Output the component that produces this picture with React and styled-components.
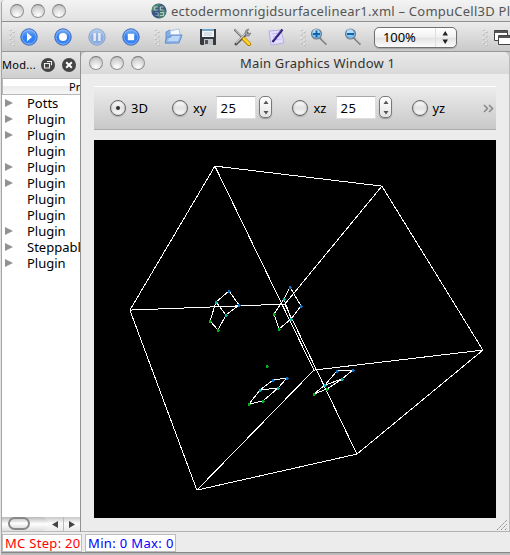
import React from "react";
import styled, { createGlobalStyle } from "styled-components";

const Global = createGlobalStyle`
  * { box-sizing: border-box; }
  body { margin: 0; overflow: hidden; background: #ececec; font: 13px/16px "Noto Sans", "Open Sans", sans-serif; color: #000; }
  svg { display: block; flex: none; }
`;
const Screen = styled.div`
  width: 510px; height: 555px; overflow: hidden; display: flex; flex-direction: column;
  border-left: 1px solid #e4e4e4; white-space: nowrap; background: #ececec;
`;
const AppWindow = styled.div`
  width: 509px; height: 553px; border-left: 1px solid #a4a4a4; border-bottom: 1px solid #858585;
  border-top-left-radius: 4px; display: flex; flex-direction: column; overflow: hidden; flex: none;
`;
const BottomShade = styled.div`height: 2px; background: #b9b9b9;`;
const TitleBar = styled.header`
  height: 22px; flex: none; display: flex; align-items: center;
  background: linear-gradient(#f3f3f3, #e2e2e2); border-bottom: 1px solid #8f8f8f;
`;
const Lights = styled.div`display: flex; gap: 7px; margin-left: ${p => p.$left}px;`;
const Light = styled.i`
  width: 14px; height: 14px; border: 1px solid #929292; border-top-color: #777; border-radius: 50%;
  background: radial-gradient(circle at 50% 85%, #fff 0, #e0e0e0 45%, #b8b8b8 100%);
`;
const Label = styled.span`
  font-size: ${p => p.$size || 13}px; letter-spacing: ${p => p.$track || 0}px; color: ${p => p.$color || "#000"};
  margin-left: ${p => p.$left || 0}px; flex: none;
`;
const Toolbar = styled.div`
  height: 30px; flex: none; display: flex; align-items: center;
  background: linear-gradient(#ececec, #c9c9c9); border-bottom: 1px solid #989898;
`;
const Item = styled.div`margin-left: ${p => p.$left}px; flex: none; opacity: ${p => p.$faded ? 0.48 : 1};`;
const ZoomBox = styled.div`
  width: 83px; height: 21px; margin: 1px 0 0 12px; display: flex; align-items: center; flex: none;
  border: 1px solid #707070; border-radius: 5px; background: linear-gradient(#fff, #f1f1f1 49%, #e3e3e3 51%, #fcfcfc);
  box-shadow: 0 1px 1px #a7a7a7;
`;
const ZoomArrows = styled.div`margin-left: auto; width: 21px; height: 19px; border-left: 1px solid #dedede; padding: 2px 0 0 6px;`;
const Workspace = styled.main`height: 480px; display: flex; flex: none;`;
const Dock = styled.aside`width: 79px; border-right: 1px solid #929292; background: #fff; overflow: hidden; display: flex; flex-direction: column; flex: none;`;
const DockTitle = styled.div`height: 26px; flex: none; display: flex; align-items: center; background: linear-gradient(#e8e8e8, #cfcfcf);`;
const TreeHeader = styled.div`height: 17px; flex: none; border: 1px solid #b8b8b8; border-right: 0; padding: 0 0 0 66px; line-height: 14px; background: linear-gradient(#fff 45%, #ececec 50%, #f7f7f7); overflow: hidden;`;
const Tree = styled.div`flex: 1;`;
const TreeRow = styled.div`height: 16px; display: flex; align-items: center; padding-left: 3px; overflow: hidden;`;
const Arrow = styled.i`
  width: 0; height: 0; flex: none; border: 4.5px solid transparent; border-left: 8px solid ${p => p.$shown ? "#929292" : "transparent"}; border-right: 0;
`;
const Scrollbar = styled.div`height: 15px; display: flex; flex: none; align-items: center; background: linear-gradient(#c8c8c8, #fafafa 45%, #e9e9e9); border-bottom: 1px solid #bbb;`;
const Track = styled.div`width: 46px; height: 14px; border-radius: 0 8px 8px 0; padding-left: 6px; background: linear-gradient(#b9b9b9, #fff 50%, #ddd); flex: none;`;
const Thumb = styled.div`width: 22px; height: 13px; border: 2px solid #888; border-radius: 8px; background: linear-gradient(#ccc, #fff 50%, #ddd);`;
const GraphWindow = styled.section`width: 429px; display: flex; flex-direction: column; background: #ececec; border-right: 1px solid #bbb; border-bottom: 1px solid #b2b2b2; border-radius: 6px 6px 0 0; overflow: hidden; flex: none;`;
const GraphTitle = styled.header`height: 22px; flex: none; display: flex; align-items: center; background: linear-gradient(#e9e9e9, #d9d9d9);`;
const GraphBack = styled.div`background: #c4c4c4; flex: none; display: flex;`;
const Controls = styled.div`
  margin: 12px 0 0 13px; width: 402px; height: 44px; flex: none; display: flex; align-items: center;
  border-top: 1px solid #fff; border-bottom: 1px solid #aaa; background: linear-gradient(#ececec, #c8c8c8);
`;
const Radio = styled.i`
  width: 16px; height: 16px; margin-left: ${p => p.$left}px; flex: none; display: grid; place-items: center;
  border: 1px solid #666; border-radius: 50%; background: linear-gradient(#fff, #e2e2e2 50%, #fff);
  box-shadow: 0 1px 1px #aaa, inset 0 0 2px #aaa;
  &::after { content: ""; width: 4px; height: 4px; border-radius: 50%; background: ${p => p.$checked ? "#303030" : "transparent"}; }
`;
const NumberField = styled.div`width: 40px; height: 23px; margin-left: ${p => p.$left}px; margin-top: -1px; padding: 3px; border: 1px solid #dedede; border-top-color: #aaa; background: #fff; letter-spacing: .5px; flex: none;`;
const Stepper = styled.div`width: 13px; height: 22px; margin: -2px 0 0 3px; padding: 2px 0 0 3px; border: 1px solid #777; border-radius: 5px; background: linear-gradient(#fff, #e4e4e4); box-shadow: 0 1px 1px #999; flex: none;`;
const Canvas = styled.div`margin: 10px 0 0 13px; width: 402px; height: 378px; background: #000; flex: none;`;
const GripRow = styled.div`display: flex; justify-content: flex-end; padding: 2px 1px 0 0;`;
const Status = styled.footer`height: 20px; display: flex; gap: 3px; padding-top: 2px; flex: none;`;
const StatusCell = styled.div`width: ${p => p.$width}px; height: 18px; padding-left: 2px; border: 1px solid #bdbdbd; background: #fff; color: ${p => p.$color}; letter-spacing: ${p => p.$track}px; overflow: hidden; flex: none;`;

const Lamps = ({ left }) => <Lights $left={left}><Light /><Light /><Light /></Lights>;

const Handle = () => (
  <svg width="6" height="18">
    {[0, 1, 2, 3].map(i => <g key={i}><circle cx="1.5" cy={2 + i * 4.4} r="1.1" fill="#aaa" /><circle cx="1.1" cy={1.6 + i * 4.4} r=".8" fill="#fff" /><circle cx="4.5" cy={4.2 + i * 4.2} r="1.1" fill="#aaa" /><circle cx="4.1" cy={3.8 + i * 4.2} r=".8" fill="#fff" /></g>)}
  </svg>
);
const PlayerIcon = ({ kind }) => (
  <svg width="18" height="18" viewBox="0 0 18 18">
    <defs><linearGradient id={"p" + kind} x2="0" y2="1"><stop stopColor="#81b4f3" /><stop offset=".48" stopColor="#347ff0" /><stop offset=".85" stopColor="#3280f5" /><stop offset="1" stopColor="#70adff" /></linearGradient></defs>
    <circle cx="9" cy="9" r="8.2" fill={`url(#p${kind})`} stroke="#3d69b8" />
    <circle cx="9" cy="9" r="7" fill="none" stroke="#9bc4ff" strokeWidth=".6" />
    {kind === "play" && <path d="M7 4.8V13.2L12 9Z" fill="#fff" />}
    {kind === "record" && <circle cx="9" cy="9" r="4" fill="#fff" />}
    {kind === "pause" && <path d="M5.5 5h2.4v8H5.5zM10.2 5h2.4v8h-2.4z" fill="#fff" />}
    {kind === "stop" && <path d="M5.8 5.8h6.4v6.4H5.8z" fill="#fff" />}
  </svg>
);
const Globe = () => (
  <svg width="16" height="16" viewBox="0 0 16 16">
    <circle cx="8" cy="8" r="7.6" fill="#405c7b" /><path d="M2 3Q5 0 9 1L7 4L3 7L1 8Q0 5 2 3M9 9l5-2l1 3l-4 5l-4-1Z" fill="#4b8770" />
    <path d="M6.5 4H3.3v3h3.4M12.5 4H9.3v3h3.4M4 9.5h3v3H4m5-3h3.5v3H9" fill="none" stroke="#abc9be" strokeWidth="1.2" />
    <path d="M1 10Q5 6 8 9l-2 5Q2 14 1 10" fill="#355098" opacity=".6" />
  </svg>
);
const Folder = () => (
  <svg width="19" height="17" viewBox="0 0 19 17">
    <path d="M2 15V4l4-2l2 2h7v10Z" fill="#84aee5" stroke="#6b94ce" /><path d="M6 3l9-2l2 10l-9 2Z" fill="#f7fbff" stroke="#abc6e7" />
    <path d="M7 7h11l-3 8H1l2-6h3Z" fill="#91b9ed" stroke="#648ed0" /><path d="M8 8h8l-2 5H4l1-3h2Z" fill="#bdd7f7" />
  </svg>
);
const Disk = () => (
  <svg width="18" height="18" viewBox="0 0 18 18">
    <path d="M1 1h16v16H2L1 16Z" fill="#353942" /><path d="M3 1h12v8H3Z" fill="#edf3f7" /><path d="M3 1h12v2H3Z" fill="#78a5c5" />
    <path d="M5 5h8M5 7h8" stroke="#c3d0da" /><path d="M5 11h9v6H5Z" fill="#c2c5c8" /><path d="M6 12h3v4H6Z" fill="#555" />
  </svg>
);
const Tools = () => (
  <svg width="19" height="18" viewBox="0 0 19 18">
    <path d="M2 2l10 10" stroke="#686868" strokeWidth="2.2" strokeLinecap="round" /><path d="M2 1.5l8 8" stroke="#eee" />
    <path d="M3 16L14 5" stroke="#555" strokeWidth="3" strokeLinecap="round" /><path d="M3 15L13 5" stroke="#ccc" strokeWidth="1.5" />
    <path d="M12 5l1-3l3-1l-2 3l1 2l3-1l-2 3h-3Z" fill="#a5a9ac" stroke="#666" strokeWidth=".6" />
    <path d="M11 11l5 5" stroke="#b27a00" strokeWidth="4.2" strokeLinecap="round" /><path d="M11 10.7l5 5" stroke="#ffd22c" strokeWidth="2.7" strokeLinecap="round" />
  </svg>
);
const Note = () => (
  <svg width="17" height="18" viewBox="0 0 17 18">
    <path d="M1 3l12-1l3 13l-13 2Z" fill="#e2dcff" stroke="#b9addf" /><path d="M4 6l8-1M5 9l7-1M5 12l8-1" stroke="#c5b9ef" />
    <path d="M4.5 14L14.5 1.5" stroke="#282171" strokeWidth="2.2" /><path d="M5.2 12.2l8-10" stroke="#6257ba" strokeWidth=".7" />
  </svg>
);
const Magnifier = ({ plus }) => (
  <svg width="18" height="18" viewBox="0 0 18 18">
    <path d="M9.5 9.5l7 7" stroke="#818181" strokeWidth="2" /><path d="M11.5 10.5l5 5" stroke="#ddd" strokeWidth=".7" />
    <circle cx="6.5" cy="6" r="5" fill="#77bbed" stroke="#747f8d" strokeWidth="1.2" /><circle cx="6" cy="4.5" r="3.3" fill="#b3ddfa" />
    <path d="M3 6h7" stroke="#1262aa" strokeWidth="2" />{plus && <path d="M6.5 2.5v7" stroke="#1262aa" strokeWidth="2" />}
  </svg>
);
const Windows = () => (
  <svg width="16" height="18"><path d="M.5 2.5h13v10H.5z" fill="#fff" stroke="#444" /><path d="M1 4h12" stroke="#555" strokeWidth="2" /><path d="M4.5 7.5h15v9h-15z" fill="#fff" stroke="#444" /><path d="M5 9h14" stroke="#555" strokeWidth="2" /></svg>
);
const UpDown = ({ small }) => small ? (
  <svg width="6" height="17"><path d="M.5 5L3 1.5L5.5 5ZM.5 12L3 15.5L5.5 12Z" fill="#555" /></svg>
) : (
  <svg width="7" height="15"><path d="M.5 5.5L3.2 1L6 5.5ZM.5 9.5L3.2 14L6 9.5Z" fill="#222" /></svg>
);
const DockButton = ({ close }) => (
  <svg width="14" height="14"><circle cx="7" cy="7" r="7" fill="#444" />
    {close ? <path d="M4.2 4.2l5.6 5.6M9.8 4.2L4.2 9.8" stroke="#fff" strokeWidth="2" /> : <path d="M6 3.5h4.5v3.8M3.5 5.5h5V10h-5Z" fill="none" stroke="#eee" strokeWidth="1.1" />}
  </svg>
);

const edges = [
  [215,166,382,186],[215,166,130,310],[215,166,314,370],[382,186,285,304],[382,186,483,350],
  [130,310,285,304],[130,310,197,490],[285,304,357,454],[483,350,314,370],[483,350,357,454],[314,370,197,490],[197,490,357,454],
];
const cells = [
  "229,291 239,305 226,315 218,330 210,321 216,302 229,291", "216,302 226,315",
  "290,287 301,306 291,319 279,329 274,314 284,299 290,287", "284,299 291,319",
  "273,380 287,378 278,388 263,401 249,404 260,390 273,380", "260,390 278,388",
  "337,371 353,370 342,379 327,389 314,394 325,385 337,371", "325,385 342,379",
];
const dots = [
  [229,291,0],[239,305,0],[216,302,1],[226,315,1],[210,321,2],[218,330,2],
  [290,287,0],[301,306,0],[284,299,1],[291,319,1],[274,314,2],[279,329,2],
  [273,380,0],[287,378,0],[260,390,1],[278,388,1],[249,404,2],[263,401,2],
  [337,371,0],[353,370,0],[325,385,1],[342,379,1],[314,394,2],[327,389,2],[267,366,2],
];
const Plot = () => (
  <svg width="402" height="378" viewBox="94 140 402 378" shapeRendering="crispEdges">
    <g stroke="#fff" fill="none">
      {edges.map(([x1, y1, x2, y2], i) => <line key={i} x1={x1 - .1} y1={y1 + .1} x2={x2 - .1} y2={y2 + .1} />)}
      {cells.map((points, i) => <polyline key={i} points={points} />)}
    </g>
    {dots.map(([x, y, c], i) => <path key={i} d={`M${x - 1} ${y}h3v1h-3zM${x - 1} ${y - 1}h2v3h-2z`} fill={["#0870c8", "#00b4b4", "#08ae18"][c]} />)}
  </svg>
);

const tree = [["Potts", 1], ["Plugin", 1], ["Plugin", 1], ["Plugin", 0], ["Plugin", 1], ["Plugin", 1], ["Plugin", 0], ["Plugin", 0], ["Plugin", 1], ["Steppable", 1], ["Plugin", 1]];

export default function App() {
  return <><Global /><Screen>
    <AppWindow>
      <TitleBar><Lamps left={8} /><Item $left={85}><Globe /></Item><Label $left={4} $color="#555" $track={.24}>ectodermonrigidsurfacelinear1.xml – CompuCell3D Player</Label></TitleBar>
      <Toolbar>
        <Item $left={7}><Handle /></Item>
        <Item $left={5}><PlayerIcon kind="play" /></Item><Item $left={16}><PlayerIcon kind="record" /></Item>
        <Item $left={16} $faded><PlayerIcon kind="pause" /></Item><Item $left={16}><PlayerIcon kind="stop" /></Item>
        <Item $left={14}><Handle /></Item><Item $left={4}><Folder /></Item><Item $left={16}><Disk /></Item>
        <Item $left={16}><Tools /></Item><Item $left={16}><Note /></Item><Item $left={15}><Handle /></Item>
        <Item $left={4}><Magnifier plus /></Item><Item $left={16}><Magnifier /></Item>
        <ZoomBox><Label $left={8} $track={-.1}>100%</Label><ZoomArrows><UpDown /></ZoomArrows></ZoomBox>
        <Item $left={25}><Handle /></Item><Item $left={6}><Windows /></Item>
      </Toolbar>
      <Workspace>
        <Dock>
          <DockTitle><Label $size={11} $track={.3}>Mod...</Label><Item $left={5}><DockButton /></Item><Item $left={7}><DockButton close /></Item></DockTitle>
          <TreeHeader><Label $size={11}>Property</Label></TreeHeader>
          <Tree>{tree.map(([name, open], i) => <TreeRow key={i}><Arrow $shown={open} /><Label $left={14}>{name}</Label></TreeRow>)}</Tree>
          <Scrollbar><Track><Thumb /></Track><Item $left={4}><svg width="28" height="15"><path d="M6 4v7L0 7.5ZM17 4v7l6-3.5Z" fill="#444" /><path d="M11.5 0v15" stroke="#bbb" /></svg></Item></Scrollbar>
        </Dock>
        <GraphBack><GraphWindow>
          <GraphTitle><Lamps left={8} /><Label $left={95} $color="#333" $track={.18}>Main Graphics Window 1</Label></GraphTitle>
          <Controls>
            <Radio $left={16} $checked /><Label $left={5}>3D</Label><Radio $left={24} /><Label $left={5}>xy</Label>
            <NumberField $left={10}>25</NumberField><Stepper><UpDown small /></Stepper>
            <Radio $left={20} /><Label $left={5}>xz</Label><NumberField $left={10}>25</NumberField><Stepper><UpDown small /></Stepper>
            <Radio $left={20} /><Label $left={4}>yz</Label>
            <Item $left={38}><svg width="11" height="9"><path d="M1 1l3.5 3.5L1 8M6 1l3.5 3.5L6 8" fill="none" stroke="#888" strokeWidth="1.5" /></svg></Item>
          </Controls>
          <Canvas><Plot /></Canvas>
          <GripRow><svg width="11" height="11"><path d="M0 10L10 0M4 10L10 4M8 10L10 8" stroke="#888" strokeDasharray="1.5 .7" /></svg></GripRow>
        </GraphWindow></GraphBack>
      </Workspace>
      <Status><StatusCell $width={80} $color="#f00" $track={.3}>MC Step: 20</StatusCell><StatusCell $width={91} $color="#00f" $track={.35}>Min: 0 Max: 0</StatusCell></Status>
    </AppWindow><BottomShade />
  </Screen></>;
}
